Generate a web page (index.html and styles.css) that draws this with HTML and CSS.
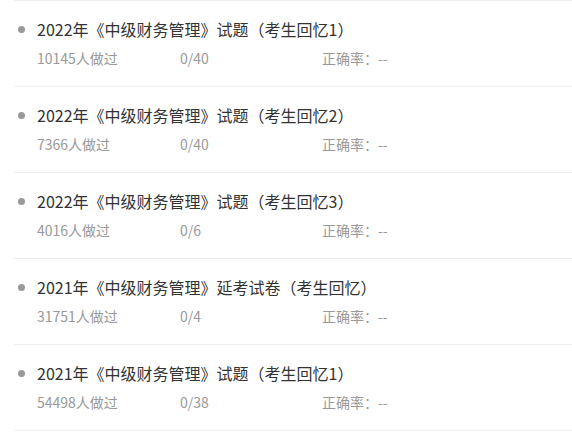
FILE: index.html
```html
<!DOCTYPE html>
<html lang="zh-CN">
  <head>
    <title>试卷列表</title>
    <link rel="stylesheet" href="styles.css">
  </head>
  <body>
    <ul class="paper-list">
      <li class="paper">
        <div class="paper-title">2022年《中级财务管理》试题（考生回忆1）</div>
        <div class="paper-meta">
          <span class="done">10145人做过</span>
          <span class="progress">0/40</span>
          <span class="rate">正确率：--</span>
        </div>
      </li>
      <li class="paper">
        <div class="paper-title">2022年《中级财务管理》试题（考生回忆2）</div>
        <div class="paper-meta">
          <span class="done">7366人做过</span>
          <span class="progress">0/40</span>
          <span class="rate">正确率：--</span>
        </div>
      </li>
      <li class="paper">
        <div class="paper-title">2022年《中级财务管理》试题（考生回忆3）</div>
        <div class="paper-meta">
          <span class="done">4016人做过</span>
          <span class="progress">0/6</span>
          <span class="rate">正确率：--</span>
        </div>
      </li>
      <li class="paper">
        <div class="paper-title">2021年《中级财务管理》延考试卷（考生回忆）</div>
        <div class="paper-meta">
          <span class="done">31751人做过</span>
          <span class="progress">0/4</span>
          <span class="rate">正确率：--</span>
        </div>
      </li>
      <li class="paper">
        <div class="paper-title">2021年《中级财务管理》试题（考生回忆1）</div>
        <div class="paper-meta">
          <span class="done">54498人做过</span>
          <span class="progress">0/38</span>
          <span class="rate">正确率：--</span>
        </div>
      </li>
    </ul>
  </body>
</html>
```

FILE: styles.css
```css
body {margin:0;background:#fff;font-family:"Noto Sans CJK SC","Noto Sans",sans-serif}
.paper-list {list-style:none;margin:0 0 0 14px;padding:0}
.paper {border-top:1px solid #eee;padding:17px 0 18px}
.paper:last-child {border-bottom:1px solid #eee}
.paper-title {display:flex;align-items:center;font-size:16px;line-height:22px;color:#333}
.paper-title::before {content:"";width:7px;height:7px;border-radius:50%;background:#999;margin:0 12px 0 4px;flex:none}
.paper-meta {display:flex;margin:8px 0 0 23px;font-size:14px;line-height:20px;color:#999}
.done {width:143px}
.progress {width:142px}
```
